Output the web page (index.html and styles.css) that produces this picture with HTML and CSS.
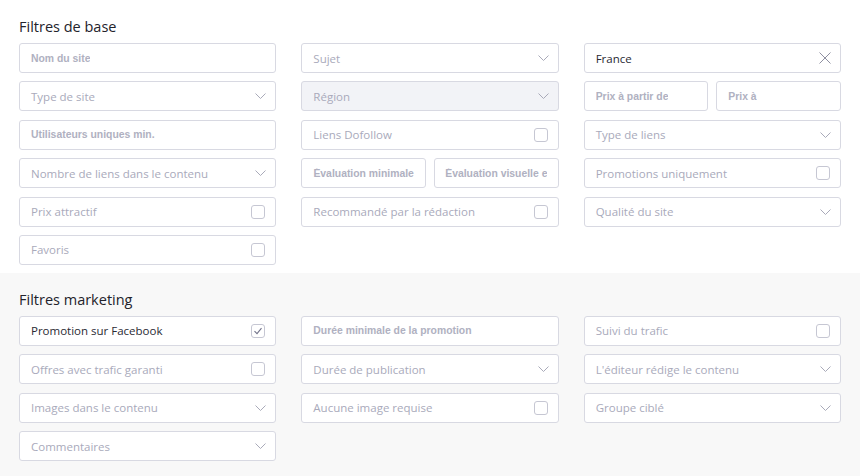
FILE: index.html
```html
<!DOCTYPE html>
<html lang="fr">
<head>
<meta charset="utf-8">
<title>Filtres</title>
<link rel="stylesheet" href="styles.css">
</head>
<body>
<section class="group">
  <h2 class="title">Filtres de base</h2>
  <div class="grid">
    <div class="field input"><span class="ph">Nom du site</span></div>
    <div class="field select"><span class="label">Sujet</span><svg class="chev" width="11" height="6" viewBox="0 0 11 6"><path d="M0.5 0.5 L5.5 5.5 L10.5 0.5"/></svg></div>
    <div class="field select"><span class="label value">France</span><svg class="clear" width="12" height="12" viewBox="0 0 12 12"><path d="M0.5 0.5 L11.5 11.5 M11.5 0.5 L0.5 11.5"/></svg></div>

    <div class="field select"><span class="label">Type de site</span><svg class="chev" width="11" height="6" viewBox="0 0 11 6"><path d="M0.5 0.5 L5.5 5.5 L10.5 0.5"/></svg></div>
    <div class="field select disabled"><span class="label">Région</span><svg class="chev" width="11" height="6" viewBox="0 0 11 6"><path d="M0.5 0.5 L5.5 5.5 L10.5 0.5"/></svg></div>
    <div class="pair">
      <div class="field input"><span class="ph">Prix à partir de</span></div>
      <div class="field input"><span class="ph">Prix à</span></div>
    </div>

    <div class="field input"><span class="ph">Utilisateurs uniques min.</span></div>
    <div class="field check"><span class="label">Liens Dofollow</span><span class="box"></span></div>
    <div class="field select"><span class="label">Type de liens</span><svg class="chev" width="11" height="6" viewBox="0 0 11 6"><path d="M0.5 0.5 L5.5 5.5 L10.5 0.5"/></svg></div>

    <div class="field select"><span class="label">Nombre de liens dans le contenu</span><svg class="chev" width="11" height="6" viewBox="0 0 11 6"><path d="M0.5 0.5 L5.5 5.5 L10.5 0.5"/></svg></div>
    <div class="pair">
      <div class="field input center"><span class="ph">Évaluation minimale</span></div>
      <div class="field input center"><span class="ph">Évaluation visuelle e</span></div>
    </div>
    <div class="field check"><span class="label">Promotions uniquement</span><span class="box"></span></div>

    <div class="field check"><span class="label">Prix attractif</span><span class="box"></span></div>
    <div class="field check"><span class="label">Recommandé par la rédaction</span><span class="box"></span></div>
    <div class="field select"><span class="label">Qualité du site</span><svg class="chev" width="11" height="6" viewBox="0 0 11 6"><path d="M0.5 0.5 L5.5 5.5 L10.5 0.5"/></svg></div>

    <div class="field check"><span class="label">Favoris</span><span class="box"></span></div>
  </div>
</section>

<section class="group marketing">
  <h2 class="title">Filtres marketing</h2>
  <div class="grid">
    <div class="field check"><span class="label value">Promotion sur Facebook</span><span class="box checked"><svg width="12" height="12" viewBox="0 0 12 12"><path d="M2.5 6.2 L5 8.7 L9.5 3.2"/></svg></span></div>
    <div class="field input"><span class="ph">Durée minimale de la promotion</span></div>
    <div class="field check"><span class="label">Suivi du trafic</span><span class="box"></span></div>

    <div class="field check"><span class="label">Offres avec trafic garanti</span><span class="box"></span></div>
    <div class="field select"><span class="label">Durée de publication</span><svg class="chev" width="11" height="6" viewBox="0 0 11 6"><path d="M0.5 0.5 L5.5 5.5 L10.5 0.5"/></svg></div>
    <div class="field select"><span class="label">L'éditeur rédige le contenu</span><svg class="chev" width="11" height="6" viewBox="0 0 11 6"><path d="M0.5 0.5 L5.5 5.5 L10.5 0.5"/></svg></div>

    <div class="field select"><span class="label">Images dans le contenu</span><svg class="chev" width="11" height="6" viewBox="0 0 11 6"><path d="M0.5 0.5 L5.5 5.5 L10.5 0.5"/></svg></div>
    <div class="field check"><span class="label">Aucune image requise</span><span class="box"></span></div>
    <div class="field select"><span class="label">Groupe ciblé</span><svg class="chev" width="11" height="6" viewBox="0 0 11 6"><path d="M0.5 0.5 L5.5 5.5 L10.5 0.5"/></svg></div>

    <div class="field select"><span class="label">Commentaires</span><svg class="chev" width="11" height="6" viewBox="0 0 11 6"><path d="M0.5 0.5 L5.5 5.5 L10.5 0.5"/></svg></div>
  </div>
</section>
</body>
</html>
```
FILE: styles.css
```css
* { box-sizing: border-box; }
html, body {
  margin: 0;
  padding: 0;
  background: #ffffff;
  font-family: "Open Sans", "Liberation Sans", sans-serif;
  overflow: hidden;
}
.group {
  padding: 17px 19px 8px 19px;
  background: #ffffff;
}
.marketing {
  background: #f8f8f8;
  height: 203px;
}
.title {
  margin: 0 0 6px 0;
  font-size: 14.5px;
  line-height: 20px;
  font-weight: 500;
  color: #23232b;
}
.grid {
  display: grid;
  grid-template-columns: repeat(3, 1fr);
  column-gap: 25px;
  row-gap: 8.4px;
}
.pair {
  display: grid;
  grid-template-columns: 1fr 1fr;
  column-gap: 8px;
}
.field {
  height: 30px;
  border: 1px solid #d8d9e2;
  border-radius: 3px;
  background: #ffffff;
  display: flex;
  align-items: center;
  justify-content: space-between;
  padding: 0 9px 0 11px;
  overflow: hidden;
  white-space: nowrap;
}
.field.check { padding-right: 10px; }
.field.center { justify-content: center; padding: 0 6px; }
.field.disabled { background: #f2f3f7; }
.label {
  font-size: 11.5px;
  color: #a9aabb;
}
.label.value { color: #2a2a33; }
.ph {
  font-family: "Liberation Sans", Arial, sans-serif;
  font-size: 10.4px;
  font-weight: bold;
  color: #b0b1c1;
  overflow: hidden;
}
.chev, .clear {
  flex: none;
  fill: none;
  stroke: #a9aab9;
  stroke-width: 1;
}
.clear { stroke: #8f90a1; }
.box {
  flex: none;
  width: 14px;
  height: 14px;
  border: 1px solid #c6c7d3;
  border-radius: 3px;
  background: #ffffff;
  display: flex;
  align-items: center;
  justify-content: center;
}
.box svg {
  fill: none;
  stroke: #72738a;
  stroke-width: 1.1;
}
```
